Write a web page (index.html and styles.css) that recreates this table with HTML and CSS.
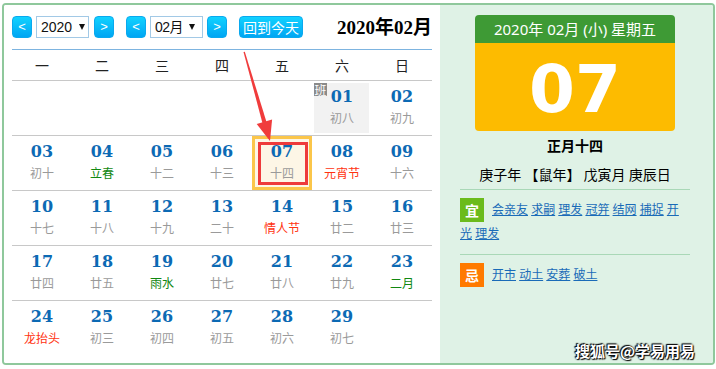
FILE: index.html
```html
<!DOCTYPE html>
<html lang="zh-CN">
<head>
<meta charset="utf-8">
<title>万年历</title>
<link rel="stylesheet" href="styles.css">
</head>
<body>
<div class="cal">
  <div class="left">
    <div class="toolbar">
      <span class="btn arrow">&lt;</span>
      <div class="sel sel-year"><span class="sel-text">2020</span><span class="tri"></span></div>
      <span class="btn arrow">&gt;</span>
      <span class="btn arrow gap-l">&lt;</span>
      <div class="sel sel-month"><span class="sel-text">02月</span><span class="tri"></span></div>
      <span class="btn arrow">&gt;</span>
      <span class="btn today-btn">回到今天</span>
      <h1 class="title">2020年02月</h1>
    </div>
    <div class="weekdays">
      <span>一</span><span>二</span><span>三</span><span>四</span><span>五</span><span>六</span><span>日</span>
    </div>
    <div class="week">
      <div class="cell"></div><div class="cell"></div><div class="cell"></div><div class="cell"></div><div class="cell"></div>
      <div class="cell work"><span class="badge-ban">班</span><b class="num">01</b><span class="lunar">初八</span></div>
      <div class="cell"><b class="num">02</b><span class="lunar">初九</span></div>
    </div>
    <div class="week">
      <div class="cell"><b class="num">03</b><span class="lunar">初十</span></div>
      <div class="cell"><b class="num">04</b><span class="lunar term">立春</span></div>
      <div class="cell"><b class="num">05</b><span class="lunar">十二</span></div>
      <div class="cell"><b class="num">06</b><span class="lunar">十三</span></div>
      <div class="cell today"><b class="num">07</b><span class="lunar">十四</span><span class="mark"></span></div>
      <div class="cell"><b class="num">08</b><span class="lunar fest">元宵节</span></div>
      <div class="cell"><b class="num">09</b><span class="lunar">十六</span></div>
    </div>
    <div class="week">
      <div class="cell"><b class="num">10</b><span class="lunar">十七</span></div>
      <div class="cell"><b class="num">11</b><span class="lunar">十八</span></div>
      <div class="cell"><b class="num">12</b><span class="lunar">十九</span></div>
      <div class="cell"><b class="num">13</b><span class="lunar">二十</span></div>
      <div class="cell"><b class="num">14</b><span class="lunar fest">情人节</span></div>
      <div class="cell"><b class="num">15</b><span class="lunar">廿二</span></div>
      <div class="cell"><b class="num">16</b><span class="lunar">廿三</span></div>
    </div>
    <div class="week">
      <div class="cell"><b class="num">17</b><span class="lunar">廿四</span></div>
      <div class="cell"><b class="num">18</b><span class="lunar">廿五</span></div>
      <div class="cell"><b class="num">19</b><span class="lunar term">雨水</span></div>
      <div class="cell"><b class="num">20</b><span class="lunar">廿七</span></div>
      <div class="cell"><b class="num">21</b><span class="lunar">廿八</span></div>
      <div class="cell"><b class="num">22</b><span class="lunar">廿九</span></div>
      <div class="cell"><b class="num">23</b><span class="lunar term">二月</span></div>
    </div>
    <div class="week">
      <div class="cell"><b class="num">24</b><span class="lunar fest">龙抬头</span></div>
      <div class="cell"><b class="num">25</b><span class="lunar">初三</span></div>
      <div class="cell"><b class="num">26</b><span class="lunar">初四</span></div>
      <div class="cell"><b class="num">27</b><span class="lunar">初五</span></div>
      <div class="cell"><b class="num">28</b><span class="lunar">初六</span></div>
      <div class="cell"><b class="num">29</b><span class="lunar">初七</span></div>
      <div class="cell"></div>
    </div>
  </div>
  <div class="right">
    <div class="card">
      <div class="card-head">2020年 02月 (小) 星期五</div>
      <div class="card-day">07</div>
    </div>
    <div class="lunar-day">正月十四</div>
    <div class="ganzhi">庚子年 【鼠年】 戊寅月 庚辰日</div>
    <div class="advice"><span class="tag tag-yi">宜</span><a href="#">会亲友</a> <a href="#">求嗣</a> <a href="#">理发</a> <a href="#">冠笄</a> <a href="#">结网</a> <a href="#">捕捉</a> <a href="#">开光</a> <a href="#">理发</a></div>
    <div class="advice"><span class="tag tag-ji">忌</span><a href="#">开市</a> <a href="#">动土</a> <a href="#">安葬</a> <a href="#">破土</a></div>
  </div>
</div>
<svg class="anno" width="716" height="369" viewBox="0 0 716 369">
  <polygon points="243.5,52 244.8,51.7 266.5,122 262.5,123.2" fill="#f03c3c"/>
  <polygon points="270,141 256.7,124 272.1,119.6" fill="#f03c3c"/>
</svg>
<div class="watermark">搜狐号@学易用易</div>
</body>
</html>
```

FILE: styles.css
```css
* { box-sizing: border-box; margin: 0; padding: 0; }

body {
  width: 716px;
  height: 369px;
  overflow: hidden;
  position: relative;
  background: #fff;
  padding: 3px 0 0 2px;
  font-family: "Noto Sans", "Noto Sans CJK SC", sans-serif;
  color: #222;
}

.cal {
  width: 713px;
  height: 362px;
  border: 2px solid #8fc89c;
  border-radius: 4px;
  display: flex;
  overflow: hidden;
}

.left {
  width: 436px;
  padding: 11px 8px 0 8px;
  background: #fff;
}

.toolbar {
  display: flex;
  align-items: center;
  height: 34px;
  padding-bottom: 11px;
  border-bottom: 1px solid #7db4e0;
}

.btn {
  display: inline-flex;
  align-items: center;
  justify-content: center;
  height: 22px;
  border-radius: 4px;
  color: #fff;
  background: linear-gradient(#12d2ff, #00a6f3);
  border: 1px solid #0aa9ee;
}

.arrow {
  width: 20px;
  font: 13px/1 "Liberation Sans", sans-serif;
  padding-bottom: 1px;
}

.sel {
  display: flex;
  align-items: center;
  width: 53px;
  height: 22px;
  margin: 0 4px 0 4px;
  border: 1px solid #a2c9e6;
  background: #fff;
  padding-left: 4px;
  font: 14px/20px "Liberation Sans", "Noto Sans CJK SC", sans-serif;
  color: #111;
}

.sel-year { margin-right: 5px; }

.sel-year .tri { margin-left: 7px; }
.sel-month .tri { margin-left: 6px; }

.sel-month .sel-text { letter-spacing: -0.5px; }

.tri {
  width: 0;
  height: 0;
  border-left: 3px solid transparent;
  border-right: 3px solid transparent;
  border-top: 6px solid #111;
}

.gap-l { margin-left: 12px; }

.today-btn {
  width: 64px;
  margin-left: 12px;
  font: 14px/20px "Noto Sans CJK SC", sans-serif;
}

.title {
  margin-left: auto;
  font: 700 19px/22px "Liberation Serif", "Noto Sans CJK SC", serif;
  color: #000;
  padding-top: 2px;
}

.weekdays {
  display: grid;
  grid-template-columns: repeat(7, 60px);
  height: 30px;
  line-height: 30px;
  text-align: center;
  font: 14px/30px "Noto Sans CJK SC", sans-serif;
  color: #222;
}

.week {
  display: grid;
  grid-template-columns: repeat(7, 60px);
  border-top: 1px solid #c8c8c8;
  height: 55px;
}

.cell {
  position: relative;
  height: 54px;
  padding-top: 5px;
  text-align: center;
}

.num {
  display: block;
  font: 700 16px/22px "DejaVu Serif", serif;
  color: #0c6ab4;
}

.lunar {
  display: block;
  font: 12px/20px "Noto Sans CJK SC", sans-serif;
  color: #9a9a9a;
}

.lunar.term { color: #118811; }
.lunar.fest { color: #ff3311; }

.work {
  background: #f2f2f2;
  box-shadow: inset 2px 2px 0 #fff, inset -3px -2px 0 #fff;
}

.badge-ban {
  position: absolute;
  left: 2px;
  top: 2px;
  width: 13px;
  height: 13px;
  background: #8a8a8a;
  color: #fff;
  font: 12px/13px "Noto Sans CJK SC", sans-serif;
}

.today {
  background: #fdf6e6;
  box-shadow: inset 0 0 0 3px #fbc64a;
}

.mark {
  position: absolute;
  left: 6px;
  top: 6px;
  width: 50px;
  height: 43px;
  border: 3px solid #ee3a3a;
}

.right {
  flex: 1;
  background: #dff2e6;
  padding-top: 10px;
}

.card {
  width: 200px;
  margin-left: 35px;
}

.card-head {
  height: 28px;
  background: #3e9a35;
  border-radius: 4px 4px 0 0;
  color: #fff;
  text-align: center;
  font: 15px/28px "Noto Sans", "Noto Sans CJK SC", sans-serif;
}

.card-day {
  height: 88px;
  background: #fdbb00;
  border-radius: 0 0 4px 4px;
  color: #fff;
  text-align: center;
  padding-top: 5px;
  font: 700 66px/83px "DejaVu Sans", sans-serif;
}

.lunar-day {
  margin-top: 4px;
  text-align: center;
  font: 700 14px/20px "Noto Sans CJK SC", sans-serif;
  color: #000;
  padding-right: 3px;
}

.ganzhi {
  margin-top: 9px;
  text-align: center;
  font: 14px/20px "Noto Sans CJK SC", sans-serif;
  color: #000;
  padding-right: 3px;
}

.advice {
  width: 230px;
  margin-left: 20px;
  border-top: 1px solid #a9d8b7;
  padding: 8px 0;
  font: 12px/24px "Noto Sans", "Noto Sans CJK SC", sans-serif;
}

.ganzhi + .advice { margin-top: 5px; }

.advice a {
  color: #1a6bb8;
  text-decoration: underline;
}

.tag {
  display: inline-block;
  vertical-align: top;
  width: 24px;
  height: 24px;
  margin-right: 8px;
  color: #fff;
  text-align: center;
  font: 700 14px/24px "Noto Sans CJK SC", sans-serif;
}

.tag-yi { background: #6bbb1c; }
.tag-ji { background: #ff7a00; }

.anno {
  position: absolute;
  left: 0;
  top: 0;
  pointer-events: none;
}

.watermark {
  position: absolute;
  left: 575px;
  top: 341px;
  font: 700 15px/20px "Noto Sans CJK SC", sans-serif;
  color: #fff;
  text-shadow: 0 0 2px #000, 1px 1px 1px #000, -1px -1px 1px #000;
}
```
